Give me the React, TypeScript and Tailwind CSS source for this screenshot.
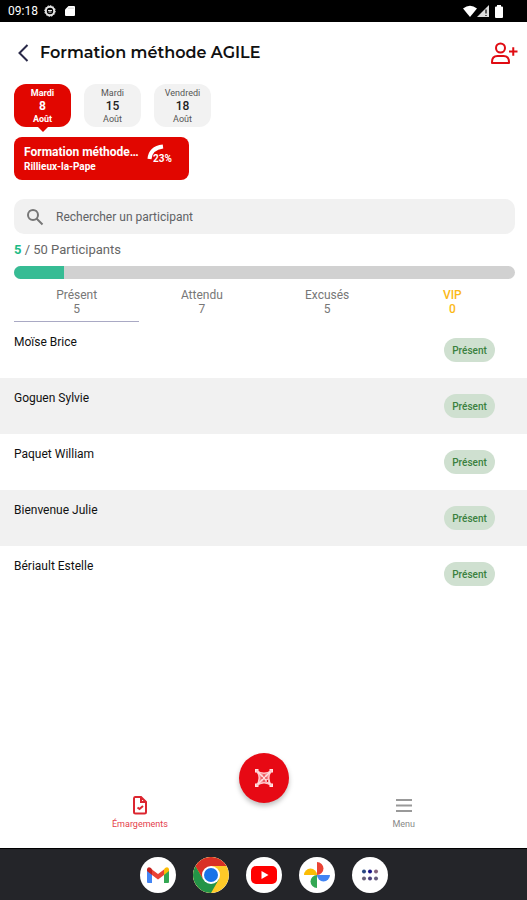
import React from "react";

const days = [
  { name: "Mardi", day: "8", month: "Août", active: true },
  { name: "Mardi", day: "15", month: "Août", active: false },
  { name: "Vendredi", day: "18", month: "Août", active: false },
];

const tabs = [
  { label: "Présent", count: 5, style: "border-[#a9a9c4] text-[#777777]" },
  { label: "Attendu", count: 7, style: "border-transparent text-[#777777]" },
  { label: "Excusés", count: 5, style: "border-transparent text-[#777777]" },
  { label: "VIP", count: 0, style: "border-transparent font-medium text-[#fbb917]" },
];

const people = ["Moïse Brice", "Goguen Sylvie", "Paquet William", "Bienvenue Julie", "Bériault Estelle"];

function StatusBar() {
  return (
    <div className="flex h-[22px] items-center bg-black px-2 text-xs text-white">
      <span>09:18</span>
      <svg className="ml-1.5 h-3 w-3" viewBox="0 0 12 12" fill="none" stroke="#e5e5e5" aria-hidden="true">
        <circle cx="6" cy="6" r="4.2" strokeWidth="2" />
        <circle cx="6" cy="6" r="5.3" strokeWidth="1" strokeDasharray="1.5 1.2" />
        <path d="M4 5.5h4M4.5 7h3" />
      </svg>
      <svg className="ml-2 h-3 w-3" viewBox="0 0 12 12" fill="white" aria-hidden="true">
        <path d="M4.5 1H10q1 0 1 1v8q0 1-1 1H2q-1 0-1-1V4.5z" />
        <path d="M5 2.5v1.5M7 2.5v1.5M9 2.5v1.5" stroke="#999" strokeWidth=".6" />
      </svg>
      <svg className="ml-auto h-3 w-[14px]" viewBox="0 0 14 12" fill="white" aria-hidden="true">
        <path d="M0 3.5Q7-2 14 3.5L7 12z" />
      </svg>
      <svg className="h-3 w-3" viewBox="0 0 12 12" aria-hidden="true">
        <path d="M0 12 12 0v12z" fill="#ddd" />
        <path d="M9 4.5v4M9 10v1" stroke="#333" strokeWidth="1.5" />
      </svg>
      <svg className="mr-4 ml-[6px] h-[13px] w-2" viewBox="0 0 8 13" fill="white" aria-hidden="true">
        <path d="M2 0h4v1.5h1q1 0 1 1V12q0 1-1 1H1q-1 0-1-1V2.5q0-1 1-1h1z" />
      </svg>
    </div>
  );
}

function Header() {
  return (
    <header className="flex h-[62px] items-center pr-2 pl-[14px]">
      <button type="button" aria-label="Retour" className="flex w-[26px] justify-center pr-2">
        <svg className="h-5 w-3" viewBox="0 0 12 20" fill="none" stroke="#292948" strokeWidth="2" aria-hidden="true">
          <path d="M10.5 2 2.5 10l8 8" />
        </svg>
      </button>
      <h1 className="text-base font-semibold text-[#111111] [font-family:Montserrat,Inter,sans-serif]">
        Formation méthode AGILE
      </h1>
      <button type="button" aria-label="Ajouter un participant" className="ml-auto">
        <svg className="h-6 w-7" viewBox="0 0 28 24" fill="none" stroke="#e00b12" strokeWidth="2" aria-hidden="true">
          <circle cx="9.500" cy="7" r="4.500" />
          <path d="M1 22v-1q0-6 5.500-6h6q5.500 0 5.500 6v1z" strokeLinejoin="round" />
          <path d="M18 10.500h8.500M22.250 6.250v8.500" />
        </svg>
      </button>
    </header>
  );
}

function Days() {
  return (
    <div className="flex gap-[13px] px-[14px]">
      {days.map((d) => (
        <button
          key={d.day}
          type="button"
          className={
            "relative flex h-[43px] w-[57px] flex-col items-center justify-center rounded-xl " +
            (d.active ? "bg-[#e10600] text-white" : "bg-[#f2f2f2] text-[#555555]")
          }
        >
          <span className={"text-[9px] leading-3 " + (d.active ? "font-bold" : "")}>{d.name}</span>
          <span className={"text-xs leading-[14px] " + (d.active ? "font-bold" : "font-medium text-[#222222]")}>{d.day}</span>
          <span className={"text-[9px] leading-3 " + (d.active ? "font-bold" : "")}>{d.month}</span>
          {d.active && (
            <svg className="absolute top-full left-1/2 h-[5px] w-[10px] -translate-x-1/2" viewBox="0 0 10 5" fill="#e10600" aria-hidden="true">
              <path d="M0 0h10L5 5z" />
            </svg>
          )}
        </button>
      ))}
    </div>
  );
}

function EventCard() {
  return (
    <section className="mt-[10px] ml-[14px] flex h-[43px] w-[175px] items-center rounded-lg bg-[#e10600] pl-[10px] text-white">
      <div>
        <h2 className="text-xs leading-4 font-bold">Formation méthode…</h2>
        <p className="text-[10px] leading-[14px] font-bold">Rillieux-la-Pape</p>
      </div>
      <svg className="ml-1.5 h-8 w-8" viewBox="0 0 32 32" role="img" aria-label="23%">
        <path d="M4.500 16C5 9 10 4.500 18 3.500" fill="none" stroke="white" strokeWidth="4" />
        <text x="8" y="19" fill="white" fontSize="10" fontWeight="700">23%</text>
      </svg>
    </section>
  );
}

function BottomNav() {
  return (
    <nav className="relative flex justify-between px-28 pt-[43px] pb-[18px]">
      <button type="button" className="flex flex-col items-center text-[9px] leading-3 text-[#e4404a]">
        <svg className="mb-[3px] h-5 w-4" viewBox="0 0 16 20" fill="none" stroke="#dc2630" strokeWidth="2" aria-hidden="true">
          <path d="M3 2h6l5 5v10q0 1.500-1.500 1.500h-9Q2 18.500 2 17V3.500Q2 2 3 2zM9 2v5h5M5.500 12.500l2 1.500 3.500-3" />
        </svg>
        Émargements
      </button>
      <button type="button" className="flex flex-col items-center text-[9px] leading-3 text-[#888888]">
        <svg className="mb-[3px] h-5 w-4" viewBox="0 0 16 20" stroke="#999999" strokeWidth="2" aria-hidden="true">
          <path d="M0 5h16M0 10.500h16M0 16h16" />
        </svg>
        Menu
      </button>
      <button
        type="button"
        aria-label="Scanner"
        className="absolute top-px left-1/2 flex h-[50px] w-[50px] -translate-x-1/2 items-center justify-center rounded-full bg-[#e70914] shadow-[0_3px_5px_rgba(0,0,0,0.25)]"
      >
        <svg className="h-5 w-5" viewBox="0 0 20 20" fill="none" stroke="#ffe4e4" aria-hidden="true">
          <path d="M2 4.500V2h2.500M15.500 2H18v2.500M18 15.500V18h-2.500M4.500 18H2v-2.500" strokeWidth="2" />
          <path d="M2.500 2.500Q10 8 17.500 2.500 12 10 17.500 17.500 10 12 2.500 17.500 8 10 2.500 2.500z" fill="#f4868b" stroke="#ffc7c9" strokeWidth="1.500" />
          <path d="m4 4 12 12M16 4 4 16" stroke="#ffe0e1" strokeWidth="1.500" />
          <path d="M10 6v2.500M7 10h2M10 12v2M11 10h2" stroke="#e93a43" />
          <circle cx="13.500" cy="13" r="1.500" fill="#e70914" />
        </svg>
      </button>
    </nav>
  );
}

const dock = "flex h-9 w-9 items-center justify-center overflow-hidden rounded-full bg-white";

function Dock() {
  return (
    <div className="flex h-[52px] items-center justify-center gap-[17px] border-t border-black bg-[#242529]">
      <button type="button" aria-label="Gmail" className={dock}>
        <svg className="h-6 w-6" viewBox="0 0 24 24" aria-hidden="true">
          <path d="M1 6v13q0 1 1 1h4V10z" fill="#4285f4" />
          <path d="M23 6v13q0 1-1 1h-4V10z" fill="#34a853" />
          <path d="M18 6.500v5.500l5-4V6q-1-3-4-1z" fill="#fbbc04" />
          <path d="M6 6.500 12 11l6-4.500V12l-6 4.500L6 12z" fill="#ea4335" />
          <path d="M6 6.500V12L1 8V6q1-3 4-1z" fill="#c5221f" />
        </svg>
      </button>
      <button type="button" aria-label="Chrome" className={dock}>
        <svg className="h-9 w-9" viewBox="0 0 36 36" aria-hidden="true">
          <circle cx="18" cy="18" r="18" fill="#ffca28" />
          <path d="M2.400 9A18 18 0 0 1 33.600 9H18v9l-7.800 4.500z" fill="#d93025" />
          <path d="M2.400 9A18 18 0 0 0 18 36l7.800-13.500-7.800-4.500-7.800 4.500z" fill="#249447" />
          <circle cx="18" cy="18" r="9" fill="white" />
          <circle cx="18" cy="18" r="7" fill="#1a73e8" />
        </svg>
      </button>
      <button type="button" aria-label="YouTube" className={dock}>
        <svg className="h-[18px] w-[26px]" viewBox="0 0 26 18" aria-hidden="true">
          <rect width="26" height="18" rx="5" fill="#ff0000" />
          <path d="m10.500 5 7 4-7 4z" fill="white" />
        </svg>
      </button>
      <button type="button" aria-label="Photos" className={dock}>
        <svg className="h-[26px] w-[26px]" viewBox="0 0 26 26" aria-hidden="true">
          <path d="M13 0a6.500 6.500 0 0 1 0 13z" fill="#ea4335" />
          <path d="M26 13a6.500 6.500 0 0 1-13 0z" fill="#4285f4" />
          <path d="M13 26a6.500 6.500 0 0 1 0-13z" fill="#34a853" />
          <path d="M0 13a6.500 6.500 0 0 1 13 0z" fill="#fbbc04" />
        </svg>
      </button>
      <button type="button" aria-label="Applications" className={dock}>
        <svg className="h-3 w-[18px]" viewBox="0 0 18 12" aria-hidden="true">
          <circle cx="3" cy="2.500" r="2" fill="#284781" />
          <circle cx="9" cy="2.500" r="2" fill="#1a1687" />
          <circle cx="15" cy="2.500" r="2" fill="#84637b" />
          <circle cx="3" cy="9.500" r="2" fill="#686076" />
          <circle cx="9" cy="9.500" r="2" fill="#4d427d" />
          <circle cx="15" cy="9.500" r="2" fill="#655c7c" />
        </svg>
      </button>
    </div>
  );
}

export default function App() {
  return (
    <div className="flex min-h-screen flex-col bg-white [font-family:Roboto,sans-serif]">
      <StatusBar />
      <Header />
      <main className="flex-1">
        <Days />
        <EventCard />
        <div className="pr-3 pl-[14px]">
          <label className="mt-[19px] flex h-[35px] items-center gap-3 rounded-[10px] bg-[#f1f1f1] px-3">
            <svg className="h-[18px] w-[18px]" viewBox="0 0 18 18" fill="none" stroke="#777777" strokeWidth="2" aria-hidden="true">
              <circle cx="7" cy="7" r="5" />
              <path d="m10.500 10.500 6 6" />
            </svg>
            <input
              type="text"
              aria-label="Rechercher un participant"
              placeholder="Rechercher un participant"
              className="min-w-0 flex-1 bg-transparent text-xs text-[#555555] outline-none placeholder:text-[#5f6265]"
            />
          </label>
          <p className="mt-2 text-[13px] leading-4 text-[#666666]">
            <span className="font-bold text-[#1dbb85]">5</span> / 50 Participants
          </p>
          <div className="mt-2 h-[13px] overflow-hidden rounded-full bg-[#d1d1d1]">
            <div className="h-full w-1/10 bg-[#36bc94]" />
          </div>
          <div className="mt-[9px] grid grid-cols-4">
            {tabs.map((t) => (
              <button key={t.label} type="button" className={"border-b pb-[5px] text-center text-xs leading-[14px] " + t.style}>
                <span className="block">{t.label}</span>
                <span className="block">{t.count}</span>
              </button>
            ))}
          </div>
        </div>
        <ul>
          {people.map((name) => (
            <li key={name} className="flex h-14 justify-between pr-8 pl-[14px] odd:bg-white even:bg-[#f1f1f1]">
              <span className="pt-3 text-xs leading-4 text-[#111111]">{name}</span>
              <span className="mt-4 flex h-6 w-[51px] items-center justify-center rounded-full bg-[#cfe0d0] text-[10px] font-medium text-[#3a803e]">
                Présent
              </span>
            </li>
          ))}
        </ul>
      </main>
      <BottomNav />
      <Dock />
    </div>
  );
}
